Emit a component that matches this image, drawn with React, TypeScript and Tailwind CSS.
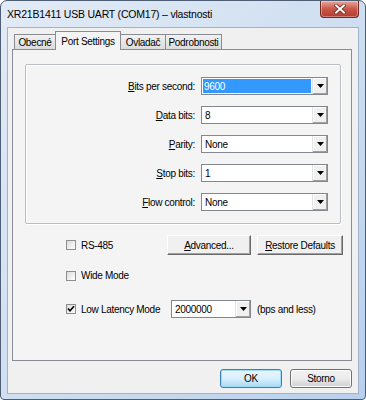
import React from 'react';

const ui = "font-['Liberation_Sans','Arial',sans-serif] text-[10px] tracking-[-0.3px] text-black";

function Arrow() {
  return (
    <svg width="7" height="4" viewBox="0 0 7 4">
      <path d="M0 0h7L3.5 4z" fill="#000" />
    </svg>
  );
}

function Combo({ value, selected, w }: { value: string; selected?: boolean; w: string }) {
  return (
    <div className={`flex h-[18px] ${w} border border-[#828790] bg-white`}>
      <div className="flex flex-1 items-center p-[1px]">
        {selected ? (
          <span className="flex h-full flex-1 items-center bg-[#3399ff] px-[1px] text-white">{value}</span>
        ) : (
          <span className="px-[2px]">{value}</span>
        )}
      </div>
      <div className="flex w-[15px] items-center justify-center border-l border-[#e3e3e3] bg-[#f0f0f0] shadow-[inset_-1px_-1px_0_#a0a0a0,inset_1px_1px_0_#ffffff]">
        <Arrow />
      </div>
    </div>
  );
}

function Check({ checked, label }: { checked?: boolean; label: string }) {
  return (
    <div className="flex items-center gap-[5px]">
      <div className="flex h-[10px] w-[10px] items-center justify-center border border-[#8f8f8f] bg-gradient-to-br from-[#dcdcdc] to-[#ffffff]">
        {checked && (
          <svg width="8" height="8" viewBox="0 0 8 8">
            <path d="M1 3.5l2 2.2L7 1.2" stroke="#000" strokeWidth="1.6" fill="none" />
          </svg>
        )}
      </div>
      <span>{label}</span>
    </div>
  );
}

function Row({ label, u, value, selected }: { label: string; u: string; value: string; selected?: boolean }) {
  return (
    <div className="flex items-center justify-end gap-[6px]">
      <span>
        <u>{u}</u>
        {label}
      </span>
      <Combo value={value} selected={selected} w="w-[127px]" />
    </div>
  );
}

function ClassicButton({ children, w }: { children: React.ReactNode; w: string }) {
  return (
    <div className={`flex h-[20px] ${w} items-center justify-center border border-[#ffffff] border-r-[#696969] border-b-[#696969] bg-[#f0f0f0] shadow-[inset_-1px_-1px_0_#a0a0a0]`}>
      {children}
    </div>
  );
}

const tabs = [
  { name: 'Obecné', w: 'w-[42px]' },
  { name: 'Port Settings', w: 'w-[66px]', active: true },
  { name: 'Ovladač', w: 'w-[46px]' },
  { name: 'Podrobnosti', w: 'w-[57px]' },
];

export default function App() {
  return (
    <div className={`${ui} h-[400px] w-[366px] overflow-hidden`}>
      <div className="flex h-[400px] w-[366px] flex-col rounded-t-[7px] rounded-b-[4px] border border-[#4d5e74] bg-gradient-to-br from-[#e2ebf6] via-[#cfdff1] to-[#b9d0ec]">
        <div className="flex h-[26px] items-start">
          <span className="mt-[6px] ml-[6px] text-[10.5px] tracking-[-0.2px]">XR21B1411 USB UART (COM17) – vlastnosti</span>
          <div className="ml-auto mr-[6px] flex h-[17px] w-[39px] items-center justify-center rounded-b-[4px] border border-t-0 border-[#6e2a22] bg-gradient-to-b from-[#e8a79b] via-[#c8574a] to-[#b63a2b] shadow-[inset_0_0_0_1px_rgba(255,255,255,0.35)]">
            <svg width="12" height="10" viewBox="0 0 12 10">
              <path d="M2 1.5l8 7M10 1.5l-8 7" stroke="#5a2018" strokeWidth="3.4" strokeLinecap="square" />
              <path d="M2 1.5l8 7M10 1.5l-8 7" stroke="#ffffff" strokeWidth="2" strokeLinecap="square" />
            </svg>
          </div>
        </div>

        <div className="mx-[6px] flex h-[367px] flex-col border border-[#9fb3cc] bg-[#f0f0f0]">
          <div className="ml-[6px] mt-[3px] flex h-[18px] items-end">
            {tabs.map((t, i) =>
              t.active ? (
                <div
                  key={t.name}
                  className={`relative z-10 -mb-[1px] -ml-px flex h-[19px] ${t.w} items-start justify-center border border-b-0 border-[#898c95] bg-[#f4f4f4] pt-[2px]`}
                >
                  {t.name}
                </div>
              ) : (
                <div
                  key={t.name}
                  className={`flex h-[15px] ${t.w} ${i > 0 ? '-ml-px' : ''} items-center justify-center border border-b-0 border-[#898c95] bg-gradient-to-b from-[#f2f2f2] to-[#dcdcdc]`}
                >
                  {t.name}
                </div>
              ),
            )}
          </div>

          <div className="ml-[4px] h-[312px] w-[340px] border border-[#898c95] bg-[#f4f4f4] pl-[12px] pt-[14px]">
            <div className="flex h-[160px] w-[316px] flex-col gap-[11px] rounded-[2px] border border-[#b9bec4] pr-[12px] pt-[12px] shadow-[1px_1px_0_#ffffff,inset_1px_1px_0_#ffffff]">
              <Row u="B" label="its per second:" value="9600" selected />
              <Row u="D" label="ata bits:" value="8" />
              <Row u="P" label="arity:" value="None" />
              <Row u="S" label="top bits:" value="1" />
              <Row u="F" label="low control:" value="None" />
            </div>

            <div className="mt-[11px] flex h-[20px] items-center">
              <div className="w-[142px] pl-[41px]">
                <Check label="RS-485" />
              </div>
              <ClassicButton w="w-[84px]">
                <span>
                  <u>A</u>dvanced...
                </span>
              </ClassicButton>
              <div className="w-[6px]" />
              <ClassicButton w="w-[86px]">
                <span>
                  <u>R</u>estore Defaults
                </span>
              </ClassicButton>
            </div>

            <div className="mt-[13px] pl-[41px]">
              <Check label="Wide Mode" />
            </div>

            <div className="mt-[17px] flex items-center pl-[41px]">
              <div className="w-[105px]">
                <Check checked label="Low Latency Mode" />
              </div>
              <Combo value="2000000" w="w-[80px]" />
              <span className="ml-[6px]">(bps and less)</span>
            </div>
          </div>

          <div className="mr-[6px] mt-[8px] flex justify-end gap-[8px]">
            <div className="flex h-[19px] w-[62px] items-center justify-center rounded-[3px] border border-[#3c7fb1] bg-gradient-to-b from-[#eaf6fd] via-[#d9f0fc] to-[#a7d9f5] shadow-[inset_0_0_0_1px_#9fdcf9]">
              OK
            </div>
            <div className="flex h-[19px] w-[62px] items-center justify-center rounded-[3px] border border-[#707070] bg-gradient-to-b from-[#f2f2f2] via-[#ebebeb] to-[#cfcfcf] shadow-[inset_0_0_0_1px_#fcfcfc]">
              Storno
            </div>
          </div>
        </div>
      </div>
    </div>
  );
}
